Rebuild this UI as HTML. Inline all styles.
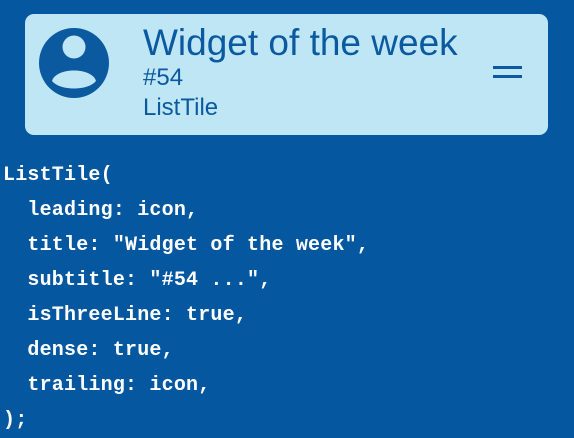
<!DOCTYPE html>
<html><head><style>
body{margin:0;width:574px;height:433px;background:#0557a0;overflow:hidden;position:relative;font-family:"Liberation Sans",sans-serif}
.card{position:absolute;left:25px;top:14px;width:523px;height:121px;background:#bfe6f4;border-radius:9px}
.t{position:absolute;color:#0b5aa0;white-space:nowrap;line-height:1}
.code{position:absolute;left:3px;top:158px;font-family:"Liberation Mono",monospace;font-size:20px;line-height:35px;color:#fff;white-space:pre;letter-spacing:0.2px;font-weight:bold}
</style></head><body>
<div class="card"></div>
<svg style="position:absolute;left:0;top:0" width="574" height="140">
<circle cx="74" cy="63" r="35" fill="#0b5aa0"/>
<circle cx="74" cy="47" r="11.5" fill="#bfe6f4"/>
<path d="M52 81 C56 67 92 67 96 81 C88 91 60 91 52 81Z" fill="#bfe6f4"/>
<rect x="493" y="66" width="29" height="3" fill="#0b5aa0"/>
<rect x="493" y="75" width="29" height="3" fill="#0b5aa0"/>
</svg>
<div class="t" style="left:143px;top:24px;font-size:37px">Widget of the week</div>
<div class="t" style="left:143px;top:66px;font-size:24px">#54</div>
<div class="t" style="left:143px;top:96px;font-size:24px">ListTile</div>
<div class="code">ListTile(
  leading: icon,
  title: "Widget of the week",
  subtitle: "#54 ...",
  isThreeLine: true,
  dense: true,
  trailing: icon,
);</div>
</body></html>
